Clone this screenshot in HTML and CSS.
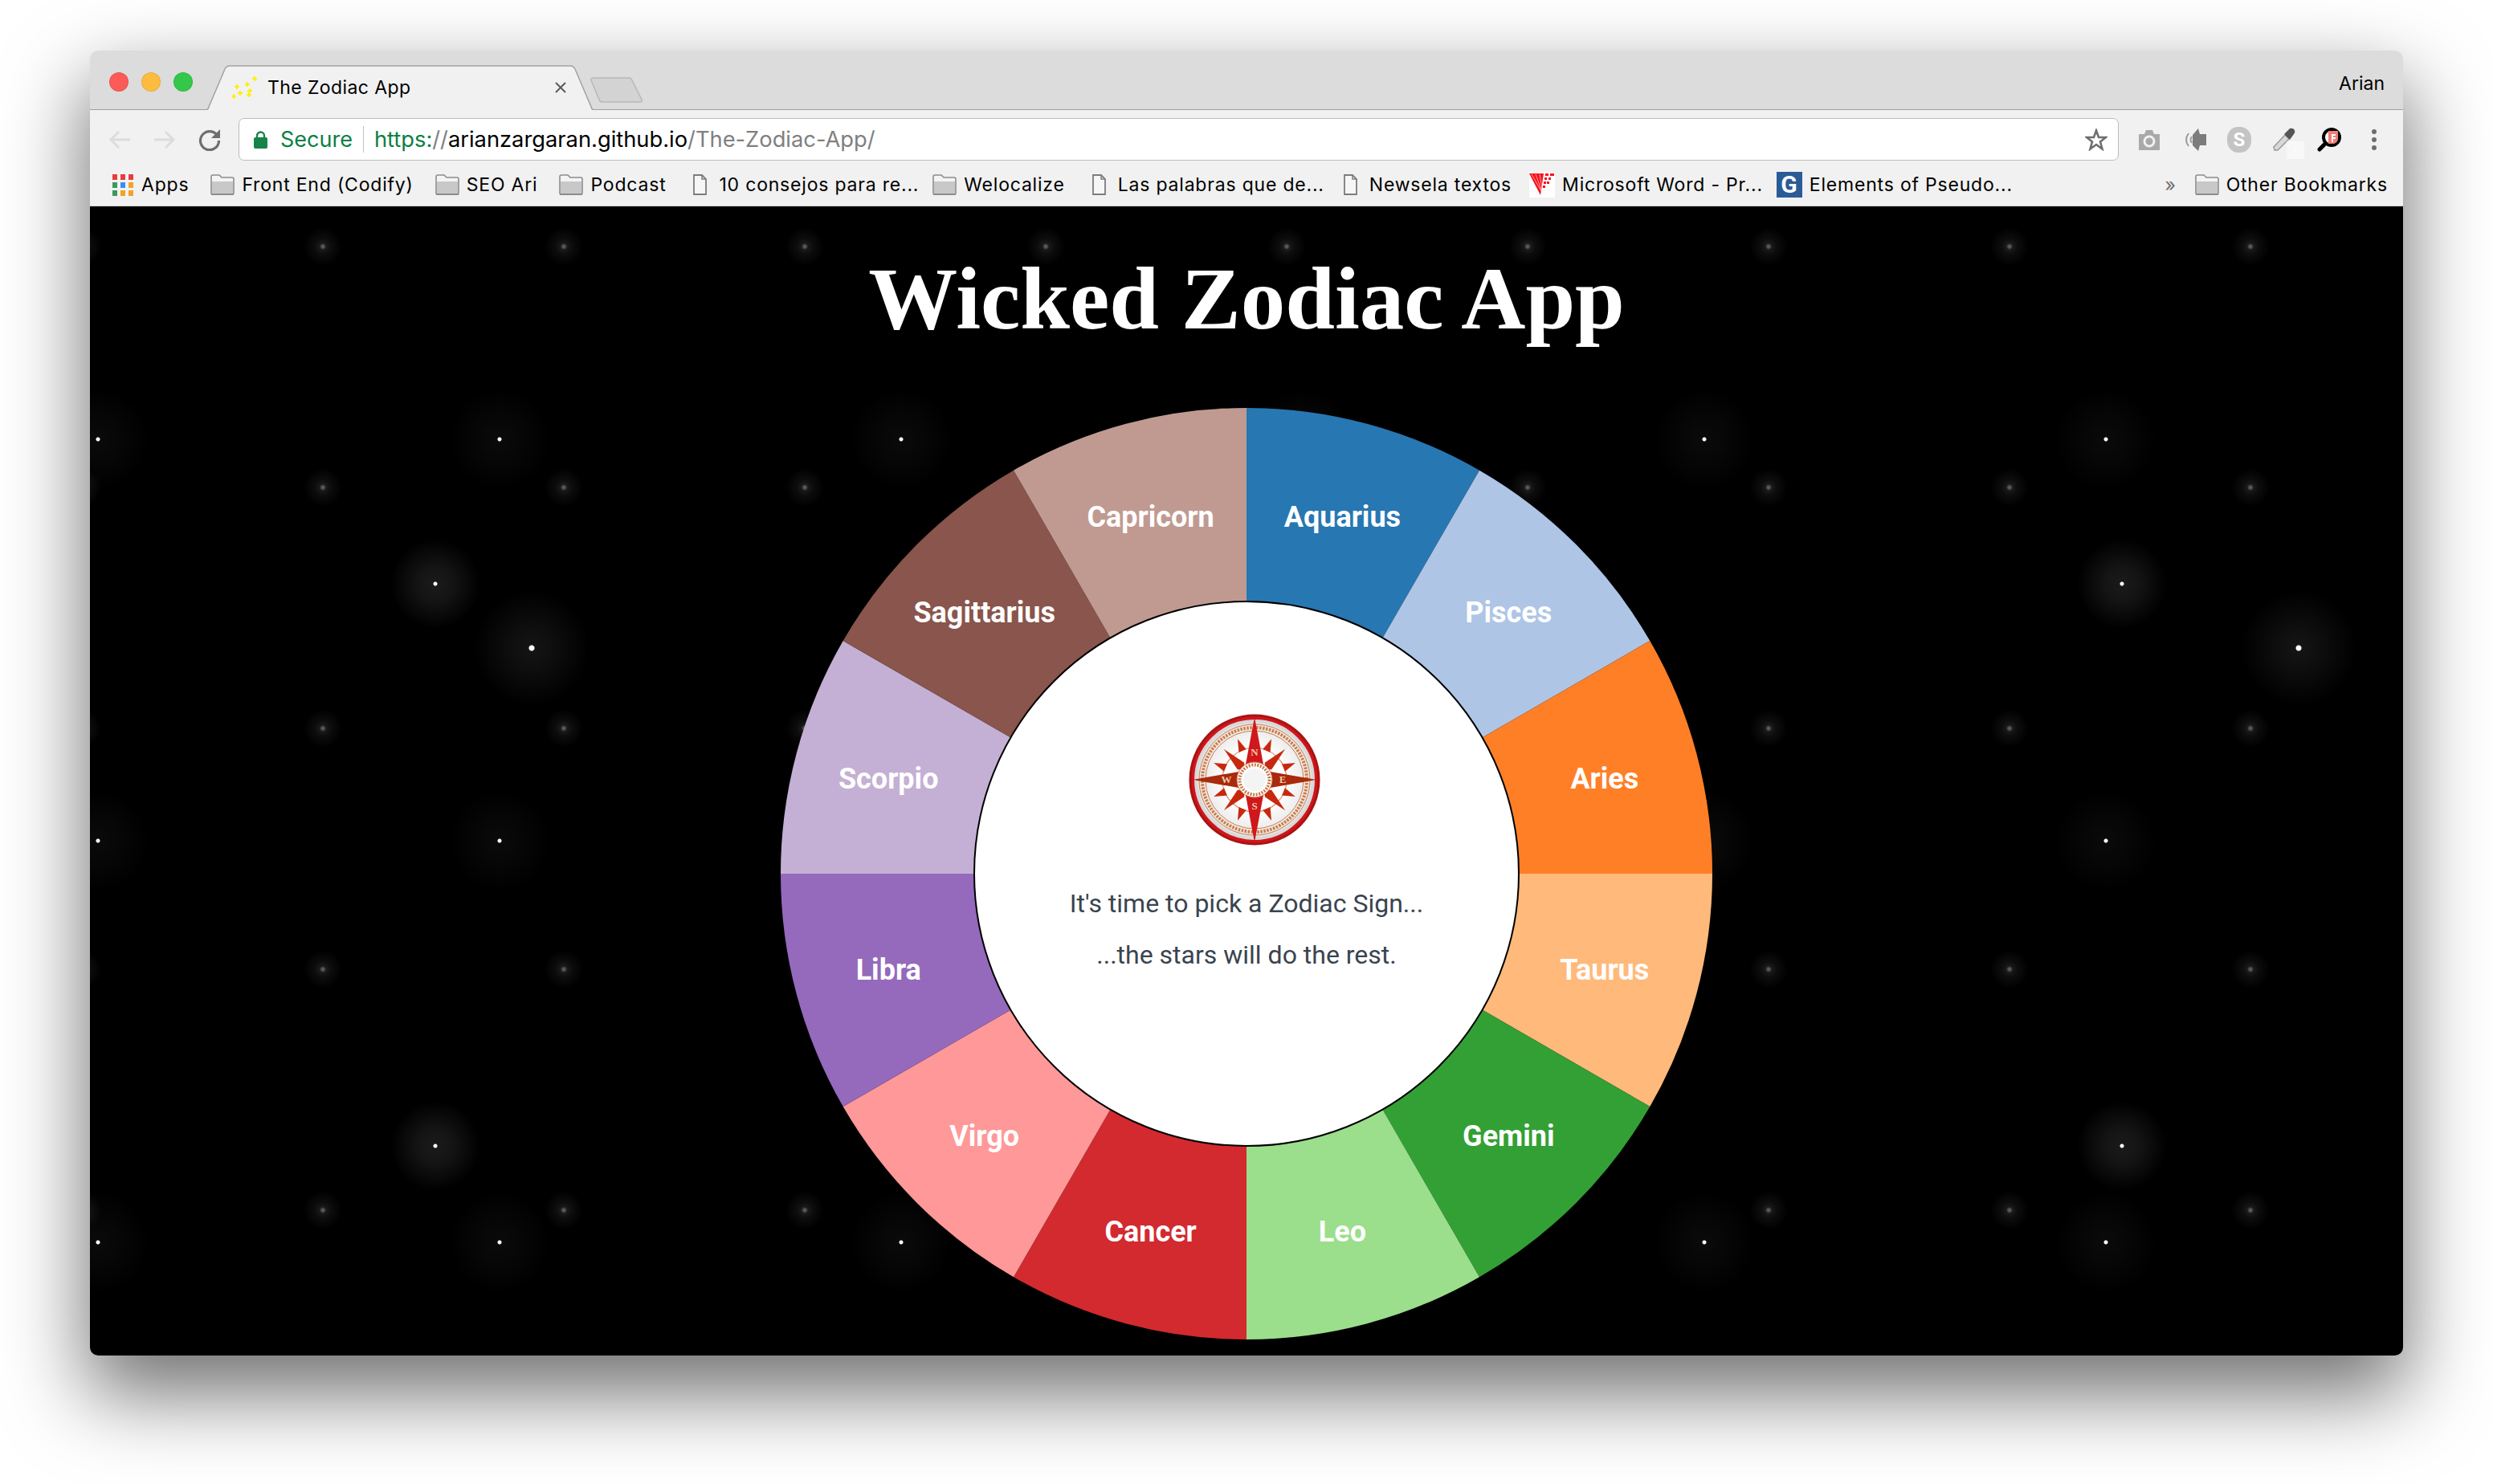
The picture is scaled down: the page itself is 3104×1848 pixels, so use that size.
FILE: index.html
```html
<!DOCTYPE html>
<html lang="en">
<head>
    <meta charset="UTF-8">
    <title>The Zodiac App</title>
    <link rel="stylesheet" href="styles.css">
</head>
<body>
    <div class="window">
        <div class="tabstrip">
            <div class="lights">
                <span class="light red"></span>
                <span class="light amber"></span>
                <span class="light green"></span>
            </div>
            <div class="tab">
                <svg class="tab-shape" viewBox="0 0 484 56"><path d="M0 56 Q3 56 4 52 L24 5 Q26 1 30 1 L454 1 Q458 1 460 5 L480 52 Q481 56 484 56" fill="#f1f1f1" stroke="#a2a2a2" stroke-width="1.5"/></svg>
                <svg class="favicon" width="32" height="28" viewBox="0 0 32 28" fill="#ffef00">
                    <path d="M27 0h2v2h2v2h-2v2h-2v-2h-2v-2h2z"/>
                    <path d="M18 7h2v2h2v2h-2v2h-2v-2h-2v-2h2z"/>
                    <path d="M5 10h2v2h2v2h-2v2h-2v-2h-2v-2h2z"/>
                    <path d="M21 15h2v2h2v2h-2v2h-2v-2h-2v-2h2z"/>
                    <path d="M9 18h2v2h2v2h-2v2h-2v-2h-2v-2h2z"/>
                    <path d="M1 22h2v2h2v2h-2v2h-2v-2h-1v-2h1z"/>
                    <path d="M20 20h2v2h2v2h-2v2h-2v-2h-2v-2h2z"/>
                </svg>
                <span class="tab-title">The Zodiac App</span>
                <svg class="tab-close" width="14" height="14" viewBox="0 0 14 14"><path d="M1 1L13 13M13 1L1 13" stroke="#5a5a5a" stroke-width="2"/></svg>
            </div>
            <svg class="newtab" width="66" height="32" viewBox="0 0 66 32"><path d="M4 1H48Q51 1 52 4L64 28Q65 31 62 31H15Q12 31 11 28L1 4Q0 1 4 1Z" fill="#d3d3d3" stroke="#b8b8b8" stroke-width="1.5"/></svg>
            <span class="profile">Arian</span>
        </div>

        <div class="toolbar">
            <svg class="nav" width="28" height="28" viewBox="0 0 28 28"><path d="M27 14H3M13 4L3 14L13 24" fill="none" stroke="#dcdcdc" stroke-width="3"/></svg>
            <svg class="nav" width="28" height="28" viewBox="0 0 28 28"><path d="M1 14H25M15 4L25 14L15 24" fill="none" stroke="#dcdcdc" stroke-width="3"/></svg>
            <svg class="nav" width="28" height="28" viewBox="0 0 28 28"><path d="M23 8A11.5 11.5 0 1 0 25.5 15" fill="none" stroke="#6e6e6e" stroke-width="3.2"/><path d="M27 1V12H16Z" fill="#6e6e6e"/></svg>
            <div class="omnibox">
                <svg class="lock" width="17" height="22" viewBox="0 0 17 22"><path d="M4 9V6A4.500 4.500 0 0 1 13 6V9" fill="none" stroke="#17834a" stroke-width="2.400"/><rect x="0" y="8" width="17" height="14" rx="2" fill="#17834a"/></svg>
                <span class="secure">Secure</span>
                <span class="url"><span class="scheme">https:</span><span class="path">//</span><span class="host">arianzargaran.github.io</span><span class="path">/The-Zodiac-App/</span></span>
                <svg class="star" width="28" height="28" viewBox="0 0 28 28"><path d="M14 2.500L17 11H26L19 16.500L21.500 25.500L14 20L6.500 25.500L9 16.500L2 11H11Z" fill="none" stroke="#6f6f6f" stroke-width="2.600"/></svg>
            </div>
            <div class="extensions">
                <svg width="28" height="28" viewBox="0 0 28 28"><path d="M1 7H8L10 2H18L20 7H27V27H1Z" fill="#a9a9a9"/><circle cx="14" cy="16" r="6" fill="none" stroke="#f1f1f1" stroke-width="3"/></svg>
                <svg width="32" height="30" viewBox="0 0 32 30"><path d="M14 9L21 1L23 8H31V22H23L21 29L14 22Z" fill="#7c7c7c"/><path d="M9 7Q3 15 9 23M13 11Q10 15 13 19" fill="none" stroke="#9b9b9b" stroke-width="2"/></svg>
                <div class="skype">S</div>
                <svg class="dropper" width="28" height="30" viewBox="0 0 28 30"><path d="M2 28L1 24L15 9L20 14L6 28Z" fill="#d8d8d8" stroke="#9a9a9a" stroke-width="1.500"/><path d="M14 8L21 1Q25 0 27 3Q28 6 26 8L21 15Z" fill="#555"/><rect x="17" y="17" width="22" height="22" fill="#f8f8f8"/><rect x="27" y="27" width="2" height="2" fill="#fff"/></svg>
                <svg width="30" height="30" viewBox="0 0 30 30"><path d="M3 27L11 19" stroke="#000" stroke-width="5" stroke-linecap="round"/><circle cx="18" cy="12" r="10" fill="#fff" stroke="#000" stroke-width="4"/><path d="M14 4H26V14Q25 20 19 20H14Z" fill="#ef7d78"/><path d="M18 8H23V10H20V12H23V14H20V18H18Z" fill="#fff"/></svg>
                <svg width="10" height="28" viewBox="0 0 10 28" fill="#6d6d6d"><circle cx="5" cy="4" r="3"/><circle cx="5" cy="14" r="3"/><circle cx="5" cy="24" r="3"/></svg>
            </div>
        </div>

        <div class="bookmarks">
            <a class="mark"><svg class="mark-icon" width="28" height="28" viewBox="0 0 28 28"><path fill="#ea3c3c" d="M1 1h6v7H1zM11 1h6v7h-6zM21 1h6v7h-6z"/><path fill="#3b9a5b" d="M1 11h6v7H1zM1 21h6v7H1z"/><path fill="#3a8df0" d="M11 11h6v7h-6z"/><path fill="#f2a227" d="M21 11h6v7h-6zM11 21h6v7h-6zM21 21h6v7h-6z"/></svg>Apps</a>
            <a class="mark"><svg class="mark-icon" width="30" height="26" viewBox="0 0 30 26"><use href="#folder"/></svg>Front End (Codify)</a>
            <a class="mark"><svg class="mark-icon" width="30" height="26" viewBox="0 0 30 26"><use href="#folder"/></svg>SEO Ari</a>
            <a class="mark"><svg class="mark-icon" width="30" height="26" viewBox="0 0 30 26"><use href="#folder"/></svg>Podcast</a>
            <a class="mark cut"><svg class="mark-icon" width="30" height="26" viewBox="0 0 30 26"><use href="#doc"/></svg>10 consejos para re...</a>
            <a class="mark"><svg class="mark-icon" width="30" height="26" viewBox="0 0 30 26"><use href="#folder"/></svg>Welocalize</a>
            <a class="mark cut"><svg class="mark-icon" width="30" height="26" viewBox="0 0 30 26"><use href="#doc"/></svg>Las palabras que de...</a>
            <a class="mark snug"><svg class="mark-icon" width="30" height="26" viewBox="0 0 30 26"><use href="#doc"/></svg>Newsela textos</a>
            <a class="mark cut"><svg class="mark-icon" width="32" height="32" viewBox="0 0 32 32"><rect width="32" height="32" fill="#fff"/><path d="M0 2H18L14 29Z" fill="#f5121d"/><path d="M3 3L15 24M8 3L15 22M13 3L16 20" stroke="#ff9da1" stroke-width="1"/><path d="M20 2h4v3h-4zM26 2h5v3h-5zM19 7h3v3h-3zM24 7h3v3h-3zM18 12h3v3h-3zM22 12h3v3h-3zM17 17h3v3h-3z" fill="#f5121d"/></svg>Microsoft Word - Pr...</a>
            <a class="mark"><span class="g-icon">G</span>Elements of Pseudo...</a>
            <span class="more">»</span>
            <a class="mark"><svg class="mark-icon" width="30" height="26" viewBox="0 0 30 26"><use href="#folder"/></svg>Other Bookmarks</a>
            <svg class="defs" width="0" height="0">
                <g id="folder"><path d="M1 24V3Q1 1 3 1H11L14 4H27Q29 4 29 6V24Q29 25 27 25H3Q1 25 1 24Z" fill="#f4f4f4" stroke="#8c8c8c" stroke-width="1.600"/><path d="M2 9H28V24H2Z" fill="#c8c8c8"/><path d="M1 25H29" stroke="#8c8c8c" stroke-width="2"/></g>
                <g id="doc"><path d="M8 1H18L23 6V25H8Z" fill="#f6f6f6" stroke="#7c7c7c" stroke-width="1.800"/><path d="M18 1V6H23" fill="none" stroke="#7c7c7c" stroke-width="1.500"/></g>
            </svg>
        </div>

        <main class="page">
            <h1 class="title">Wicked Zodiac App</h1>
            <div class="wheel">
                <svg class="pie" width="1160" height="1160" viewBox="-580 -580 1160 1160">
                    <path fill="#2777b2" d="M0 0V-580A580 580 0 0 1 290 -502.300Z"/>
                    <path fill="#aec5e6" d="M0 0L290 -502.300A580 580 0 0 1 502.300 -290Z"/>
                    <path fill="#ff7f27" d="M0 0L502.300 -290A580 580 0 0 1 580 0Z"/>
                    <path fill="#ffb97a" d="M0 0H580A580 580 0 0 1 502.300 290Z"/>
                    <path fill="#33a035" d="M0 0L502.300 290A580 580 0 0 1 290 502.300Z"/>
                    <path fill="#9bde8c" d="M0 0L290 502.300A580 580 0 0 1 0 580Z"/>
                    <path fill="#d22a2f" d="M0 0V580A580 580 0 0 1 -290 502.300Z"/>
                    <path fill="#ff9898" d="M0 0L-290 502.300A580 580 0 0 1 -502.300 290Z"/>
                    <path fill="#9569bc" d="M0 0L-502.300 290A580 580 0 0 1 -580 0Z"/>
                    <path fill="#c4b0d4" d="M0 0H-580A580 580 0 0 1 -502.300 -290Z"/>
                    <path fill="#89554c" d="M0 0L-502.300 -290A580 580 0 0 1 -290 -502.300Z"/>
                    <path fill="#c09a91" d="M0 0L-290 -502.300A580 580 0 0 1 0 -580Z"/>
                    <g class="sign">
                        <text x="119.400" y="-445.800" dy=".37em">Aquarius</text>
                        <text x="326.300" y="-326.300" dy=".37em">Pisces</text>
                        <text x="445.800" y="-119.400" dy=".37em">Aries</text>
                        <text x="445.800" y="119.400" dy=".35em">Taurus</text>
                        <text x="326.300" y="326.300" dy=".35em">Gemini</text>
                        <text x="119.400" y="445.800" dy=".35em">Leo</text>
                        <text x="-119.400" y="445.800" dy=".35em">Cancer</text>
                        <text x="-326.300" y="326.300" dy=".35em">Virgo</text>
                        <text x="-445.800" y="119.400" dy=".35em">Libra</text>
                        <text x="-445.800" y="-119.400" dy=".37em">Scorpio</text>
                        <text x="-326.300" y="-326.300" dy=".37em">Sagittarius</text>
                        <text x="-119.400" y="-445.800" dy=".37em">Capricorn</text>
                    </g>
                </svg>
                <div class="hub">
                    <svg class="compass" width="164" height="164" viewBox="-82 -82 164 164">
                        <defs>
                            <radialGradient id="dial"><stop offset="0.500" stop-color="#fff"/><stop offset="1" stop-color="#e4e4e4"/></radialGradient>
                            <path id="tick" d="M0 -55L5 -39H-5Z" fill="#c8280f"/>
                            <path id="blade" d="M0 -54L6 -24L0 -18L-6 -24Z" fill="#c8280f"/>
                        </defs>
                        <circle r="80" fill="#d0151b" stroke="#a91412" stroke-width="3"/>
                        <circle r="73" fill="url(#dial)" stroke="#d8d8d8" stroke-width="4"/>
                        <circle r="69" fill="none" stroke="#d17a45" stroke-width="1"/>
                        <circle r="65" fill="none" stroke="#d17a45" stroke-width="4" stroke-dasharray="2.500 1.500"/>
                        <circle r="61" fill="none" stroke="#d17a45" stroke-width="1"/>
                        <circle r="40" fill="none" stroke="#d99067" stroke-width="1.200"/>
                        <use href="#tick" transform="rotate(22.500)"/>
                        <use href="#tick" transform="rotate(67.500)"/>
                        <use href="#tick" transform="rotate(112.500)"/>
                        <use href="#tick" transform="rotate(157.500)"/>
                        <use href="#tick" transform="rotate(202.500)"/>
                        <use href="#tick" transform="rotate(247.500)"/>
                        <use href="#tick" transform="rotate(292.500)"/>
                        <use href="#tick" transform="rotate(337.500)"/>
                        <use href="#blade" transform="rotate(45)"/>
                        <use href="#blade" transform="rotate(135)"/>
                        <use href="#blade" transform="rotate(225)"/>
                        <use href="#blade" transform="rotate(315)"/>
                        <path d="M-77 0L-14 -11L14 -11L77 0L14 11L-14 11Z" fill="#a92a0c"/>
                        <path d="M0 -78L12 -14L12 14L0 78L-12 14L-12 -14Z" fill="#d0181c"/>
                        <circle r="22" fill="#fff" stroke="#c9784a" stroke-width="1"/>
                        <circle r="18.500" fill="none" stroke="#c9784a" stroke-width="4" stroke-dasharray="2 1.600"/>
                        <circle r="14" fill="#f4f4f4"/>
                        <g class="points">
                            <text y="-30">N</text>
                            <text y="37">S</text>
                            <text x="-35" y="4">W</text>
                            <text x="35" y="4">E</text>
                        </g>
                    </svg>
                    <p class="pick">It's time to pick a Zodiac Sign...</p>
                    <p class="pick">...the stars will do the rest.</p>
                </div>
            </div>
        </main>
    </div>
</body>
</html>
```

FILE: styles.css
```css
html, body {
    margin: 0;
    height: 100%;
}
body {
    background-color: #ffffff;
    padding: 63px 112px 0;
    box-sizing: border-box;
    overflow: hidden;
    font-family: 'Inter', 'Roboto', sans-serif;
    color: #000000;
}
.window {
    width: 2880px;
    height: 1625px;
    display: flex;
    flex-direction: column;
    border-radius: 10px;
    overflow: hidden;
    box-shadow: 0 44px 100px 4px rgba(0, 0, 0, 0.56);
}

/* title bar */
.tabstrip {
    height: 74px;
    box-sizing: border-box;
    flex-shrink: 0;
    display: flex;
    align-items: flex-end;
    background-color: #dcdcdc;
    border-bottom: 1px solid #a0a0a0;
}
.lights {
    display: flex;
    gap: 16px;
    align-self: flex-start;
    margin: 27px 0 0 24px;
}
.light {
    width: 24px;
    height: 24px;
    border-radius: 50%;
    box-sizing: border-box;
    border: 1px solid rgba(0, 0, 0, 0.08);
}
.red { background-color: #fc5b57; }
.amber { background-color: #fdbc40; }
.green { background-color: #34c84a; }
.tab {
    position: relative;
    width: 484px;
    height: 56px;
    margin: 0 0 -1px 16px;
    display: flex;
    align-items: center;
    flex-shrink: 0;
}
.tab-shape {
    position: absolute;
    inset: 0;
}
.favicon {
    position: relative;
    margin-left: 33px;
}
.tab-title {
    position: relative;
    margin-left: 12px;
    font-size: 23px;
    letter-spacing: 0.4px;
    white-space: nowrap;
}
.tab-close {
    position: relative;
    margin-left: auto;
    margin-right: 35px;
}
.newtab {
    margin: 0 0 8px -5px;
}
.profile {
    margin-left: auto;
    margin-right: 23px;
    align-self: flex-start;
    margin-top: 27px;
    font-size: 23px;
}

/* toolbar */
.toolbar {
    height: 69px;
    box-sizing: border-box;
    flex-shrink: 0;
    display: flex;
    align-items: center;
    padding: 10px 22px 6px 23px;
    background-color: #f1f1f1;
}
.nav {
    margin-right: 28px;
}
.nav:nth-child(3) {
    margin-right: 22px;
}
.omnibox {
    flex: 1;
    height: 53px;
    box-sizing: border-box;
    display: flex;
    align-items: center;
    padding: 0 13px 0 18px;
    background-color: #ffffff;
    border: 1.5px solid #bcbcbc;
    border-radius: 7px;
    font-size: 27px;
}
.secure {
    margin-left: 16px;
    padding-right: 13px;
    border-right: 1.5px solid #c4c4c4;
    color: #0b8043;
    line-height: 33px;
}
.url {
    margin-left: 13px;
    font-size: 27.3px;
    white-space: nowrap;
}
.scheme { color: #0b8043; }
.host { color: #000000; }
.path { color: #808080; }
.star {
    margin-left: auto;
}
.extensions {
    display: grid;
    grid-template-columns: repeat(6, 28px);
    gap: 28px;
    align-items: center;
    justify-items: center;
    margin-left: 24px;
}
.skype {
    width: 30px;
    height: 32px;
    border-radius: 45%;
    background-color: #c4c4c4;
    color: #ffffff;
    font: bold 24px/32px 'Roboto', sans-serif;
    text-align: center;
}
.dropper {
    overflow: visible;
}

/* bookmarks */
.bookmarks {
    height: 51px;
    box-sizing: border-box;
    flex-shrink: 0;
    display: flex;
    align-items: center;
    gap: 27px;
    padding: 0 19px 2px 27px;
    background-color: #f1f1f1;
    border-bottom: 1px solid #cfcfcf;
    font-size: 23px;
    letter-spacing: 0.8px;
    white-space: nowrap;
}
.mark {
    display: flex;
    align-items: center;
    gap: 9px;
}
.cut {
    margin-right: -10px;
}
.snug {
    margin-right: -5px;
}
.g-icon {
    width: 32px;
    height: 32px;
    background-color: #2a5b96;
    color: #ffffff;
    font: bold 30px/32px 'Roboto', sans-serif;
    text-align: center;
}
.more {
    margin-left: auto;
    margin-right: -4px;
    color: #6b6b6b;
}
.defs {
    position: absolute;
}

/* page */
.page {
    flex: 1;
    min-height: 0;
    overflow: hidden;
    background-color: #000000;
    background-image:
        radial-gradient(circle, #ffffff 0, #ffffff 3px, rgba(255, 255, 255, 0.08) 4px, rgba(255, 255, 255, 0.06) 24px, transparent 72px),
        radial-gradient(circle, #ffffff 0, #ffffff 2px, rgba(255, 255, 255, 0.1) 3px, rgba(255, 255, 255, 0.08) 22px, transparent 56px),
        radial-gradient(circle, #ffffff 0, #ffffff 2px, rgba(255, 255, 255, 0.04) 3px, rgba(255, 255, 255, 0.028) 24px, transparent 64px),
        radial-gradient(circle, rgba(255, 255, 255, 0.4) 0, rgba(255, 255, 255, 0.3) 2px, rgba(255, 255, 255, 0.1) 4px, rgba(255, 255, 255, 0.05) 10px, transparent 24px);
    background-size: 2200px 1000px, 2100px 700px, 500px 500px, 300px 300px;
    background-position: -550px 50px, -620px 120px, -240px 40px, 140px -100px;
}
.title {
    margin: 0;
    padding-top: 56px;
    font: bold 111px/118px 'Liberation Serif', serif;
    color: #ffffff;
    text-align: center;
}
.wheel {
    position: relative;
    width: 1160px;
    height: 1160px;
    margin: 77px auto 0;
}
.pie {
    display: block;
}
.sign text {
    font: bold 36px 'Roboto', sans-serif;
    fill: #ffffff;
    text-anchor: middle;
}
.hub {
    position: absolute;
    left: 240px;
    top: 240px;
    width: 680px;
    height: 680px;
    box-sizing: border-box;
    padding-top: 139px;
    display: flex;
    flex-direction: column;
    align-items: center;
    border: 2px solid #000000;
    border-radius: 50%;
    background-color: #ffffff;
}
.compass {
    margin-left: 20px;
    margin-bottom: 40px;
    flex-shrink: 0;
}
.points text {
    font: bold 13px 'Liberation Serif', serif;
    fill: #f0c9a8;
    text-anchor: middle;
}
.pick {
    margin: 0;
    font: 32px/64px 'Roboto', sans-serif;
    color: #3a444e;
}
```
